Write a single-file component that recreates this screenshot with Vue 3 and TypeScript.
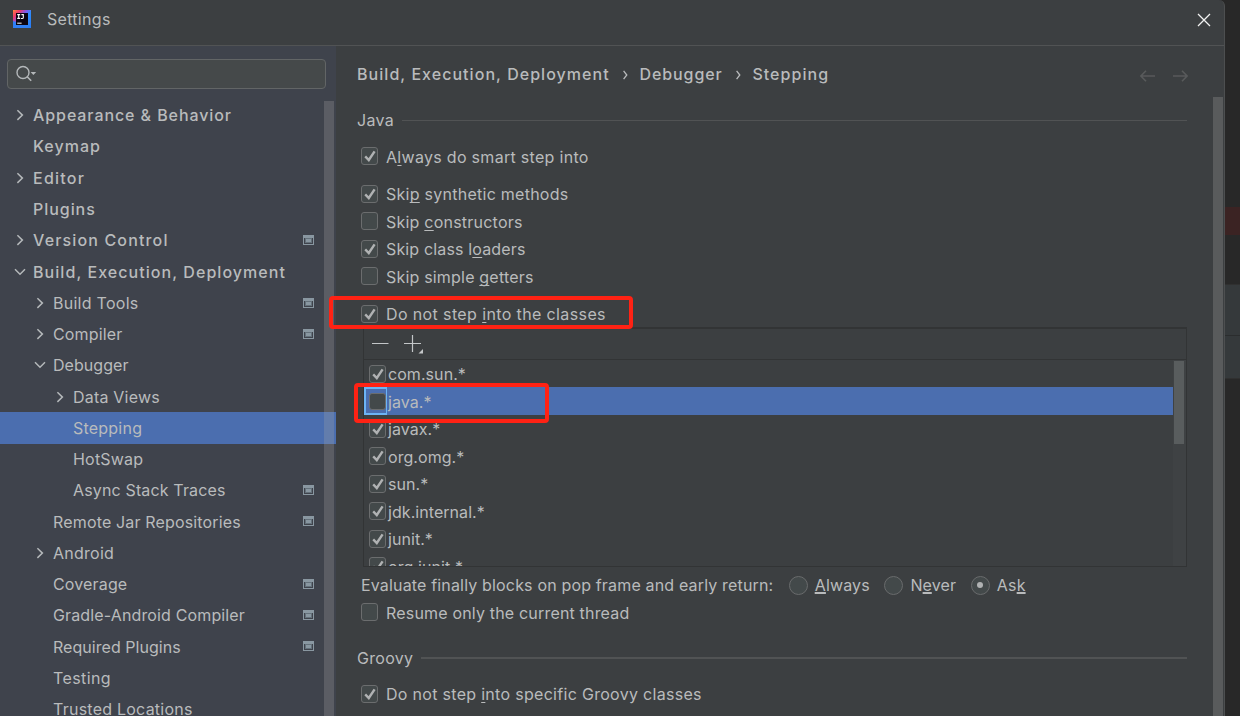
<script setup lang="ts">
interface TreeItem {
  label: string
  level: number
  tracking: number
  arrow?: 'right' | 'down'
  bold?: boolean
  project?: boolean
  selected?: boolean
}
interface Option {
  before: string
  key: string
  after: string
  tracking: number
  checked: boolean
  gap?: boolean
}

const tree: TreeItem[] = [
  { label: 'Appearance & Behavior', level: 0, tracking: 0.92, arrow: 'right', bold: true },
  { label: 'Keymap', level: 0, tracking: 1, bold: true },
  { label: 'Editor', level: 0, tracking: 1.25, arrow: 'right', bold: true },
  { label: 'Plugins', level: 0, tracking: 0.95, bold: true },
  { label: 'Version Control', level: 0, tracking: 1.15, arrow: 'right', bold: true, project: true },
  { label: 'Build, Execution, Deployment', level: 0, tracking: 1.06, arrow: 'down', bold: true },
  { label: 'Build Tools', level: 1, tracking: 0.27, arrow: 'right', project: true },
  { label: 'Compiler', level: 1, tracking: 0.15, arrow: 'right', project: true },
  { label: 'Debugger', level: 1, tracking: 0.05, arrow: 'down' },
  { label: 'Data Views', level: 2, tracking: 0.2, arrow: 'right' },
  { label: 'Stepping', level: 2, tracking: 0.22, selected: true },
  { label: 'HotSwap', level: 2, tracking: 0.2 },
  { label: 'Async Stack Traces', level: 2, tracking: 0.15, project: true },
  { label: 'Remote Jar Repositories', level: 1, tracking: 0.16, project: true },
  { label: 'Android', level: 1, tracking: 0.25, arrow: 'right' },
  { label: 'Coverage', level: 1, tracking: 0.15, project: true },
  { label: 'Gradle-Android Compiler', level: 1, tracking: 0.14, project: true },
  { label: 'Required Plugins', level: 1, tracking: 0.04, project: true },
  { label: 'Testing', level: 1, tracking: 0.4 },
  { label: 'Trusted Locations', level: 1, tracking: 0.24 },
]

const options: Option[] = [
  { before: 'A', key: 'l', after: 'ways do smart step into', tracking: 0.3, checked: true },
  { before: 'Ski', key: 'p', after: ' synthetic methods', tracking: 0.26, checked: true, gap: true },
  { before: 'Skip ', key: 'c', after: 'onstructors', tracking: 0.22, checked: false },
  { before: 'Skip class l', key: 'o', after: 'aders', tracking: 0.15, checked: true },
  { before: 'Skip simple ', key: 'g', after: 'etters', tracking: 0.19, checked: false },
  { before: 'Do not step ', key: 'i', after: 'nto the classes', tracking: 0.38, checked: true, gap: true },
]

const patterns = [
  { name: 'com.sun.*', checked: true },
  { name: 'java.*', checked: false, selected: true },
  { name: 'javax.*', checked: true },
  { name: 'org.omg.*', checked: true },
  { name: 'sun.*', checked: true },
  { name: 'jdk.internal.*', checked: true },
  { name: 'junit.*', checked: true },
  { name: 'org.junit.*', checked: true },
]

const radios = [
  { before: '', key: 'A', after: 'lways', on: false },
  { before: 'N', key: 'e', after: 'ver', on: false },
  { before: 'As', key: 'k', after: '', on: true },
]
</script>

<template>
  <div class="screen">
    <div class="window">
      <header class="titlebar">
        <svg class="logo" width="18" height="18" viewBox="0 0 18 18">
          <defs>
            <linearGradient id="lg" x1="0" y1="0" x2="1" y2="0.9">
              <stop offset="0" stop-color="#ff8a3c" />
              <stop offset="0.22" stop-color="#f0386b" />
              <stop offset="0.45" stop-color="#7b5cf0" />
              <stop offset="0.6" stop-color="#2f8dfc" />
              <stop offset="1" stop-color="#2a7df5" />
            </linearGradient>
          </defs>
          <rect width="18" height="18" fill="url(#lg)" />
          <path d="M0 11L3 12V15H15V18H0Z" fill="#2f80f6" />
          <rect x="3" y="3" width="12" height="12" fill="#0b0512" />
          <path d="M4.2 4.6H7.2M5.7 4.6V8.4M4.2 8.4H7.2M8.4 4.6H10.3V7.4Q10.3 8.5 9.2 8.5H8" fill="none" stroke="#fff" stroke-width="1.1" />
          <path d="M4.2 13.2H8.6" stroke="#ddd" stroke-width="1.2" />
        </svg>
        <span class="title">Settings</span>
        <svg class="close" width="14" height="14" viewBox="0 0 14 14">
          <path d="M1 1L13 13M13 1L1 13" stroke="#f2f2f2" stroke-width="1.3" />
        </svg>
      </header>

      <div class="body">
        <aside class="sidebar">
          <div class="search">
            <svg width="22" height="18" viewBox="0 0 22 18">
              <circle cx="7" cy="7.5" r="6" fill="none" stroke="#b4b8ba" stroke-width="1.4" />
              <path d="M11.2 11.8L15.2 15.8" stroke="#b4b8ba" stroke-width="1.6" />
              <path d="M14.6 7H20.2L17.4 9.9Z" fill="#b4b8ba" />
            </svg>
          </div>
          <ul class="tree">
            <li
              v-for="item in tree"
              :key="item.label"
              :class="['node', 'level-' + item.level, { bold: item.bold, selected: item.selected }]"
            >
              <svg class="arrow" width="14" height="14" viewBox="0 0 14 14">
                <path v-if="item.arrow === 'right'" d="M4.4 2.3L9.4 7.1L4.4 11.9" />
                <path v-else-if="item.arrow === 'down'" d="M2 4.2L7 9.2L12 4.2" />
              </svg>
              <span class="label" :style="{ letterSpacing: item.tracking + 'px' }">{{ item.label }}</span>
              <svg v-if="item.project" class="project" width="11" height="10" viewBox="0 0 11 10">
                <path d="M0 0H11V10H0ZM1 3V9H10V3Z" fill="#8997a1" fill-rule="evenodd" />
                <rect x="2.5" y="3.5" width="6" height="4" fill="#8997a1" stroke="#64717b" />
              </svg>
            </li>
          </ul>
          <div class="side-thumb"></div>
        </aside>

        <main class="content">
          <div class="crumbs">
            <span>Build, Execution, Deployment</span>
            <svg width="5" height="10" viewBox="0 0 5 10"><path d="M0.6 0.8L3.8 5L0.6 9.2" /></svg>
            <span class="parent">Debugger</span>
            <svg width="5" height="10" viewBox="0 0 5 10"><path d="M0.6 0.8L3.8 5L0.6 9.2" /></svg>
            <span>Stepping</span>
            <div class="history">
              <svg width="15" height="12" viewBox="0 0 15 12"><path d="M6 0.7L0.9 6L6 11.3M1 6H15" /></svg>
              <svg width="15" height="12" viewBox="0 0 15 12"><path d="M9 0.7L14.1 6L9 11.3M14 6H0" /></svg>
            </div>
          </div>

          <div class="section"><span>Java</span><hr /></div>

          <div class="options">
            <label v-for="o in options" :key="o.before + o.key" :class="['option', { gap: o.gap }]">
              <span class="box">
                <svg v-if="o.checked" viewBox="0 0 18 18"><path d="M4.2 9.3L7.8 13L13.6 4.3" /></svg>
              </span>
              <span class="text" :style="{ letterSpacing: o.tracking + 'px' }">{{ o.before }}<u>{{ o.key }}</u>{{ o.after }}</span>
            </label>
          </div>

          <div class="panel">
            <div class="toolbar">
              <svg width="60" height="20" viewBox="0 0 60 20">
                <path d="M0 9.5H16.5M32 9.5H49M40.5 1V18" stroke="#c3c6c8" stroke-width="1.2" fill="none" />
                <path d="M51 15V19.5H46.5Z" fill="#c3c6c8" />
              </svg>
            </div>
            <div class="list">
              <div class="rows">
                <div v-for="p in patterns" :key="p.name" :class="['row', { active: p.selected }]">
                  <span class="cell">
                    <span class="box">
                      <svg v-if="p.checked" viewBox="0 0 18 18"><path d="M4.2 9.3L7.8 13L13.6 4.3" /></svg>
                    </span>
                  </span>
                  <span class="name">{{ p.name }}</span>
                </div>
              </div>
              <div class="track"><div class="thumb"></div></div>
            </div>
          </div>

          <div class="evaluate">
            <span class="question">Evaluate finally blocks on pop frame and early return:</span>
            <label v-for="r in radios" :key="r.key" class="choice">
              <span :class="['radio', { on: r.on }]"></span>
              <span class="rtext">{{ r.before }}<u>{{ r.key }}</u>{{ r.after }}</span>
            </label>
          </div>

          <label class="option resume">
            <span class="box"></span>
            <span class="text">Resume only the current thread</span>
          </label>

          <div class="section groovy"><span>Groovy</span><hr /></div>

          <label class="option specific">
            <span class="box">
              <svg viewBox="0 0 18 18"><path d="M4.2 9.3L7.8 13L13.6 4.3" /></svg>
            </span>
            <span class="text">Do not step <u>i</u>nto specific Groovy classes</span>
          </label>
          <div class="main-thumb"></div>
        </main>
      </div>
    </div>

    <div class="editor">
      <div class="breakpoint"></div>
      <div class="pane"></div>
    </div>

    <div class="mark mark-option"></div>
    <div class="mark mark-pattern"></div>
  </div>
</template>

<style>
html,
body {
  background: #282828;
  overflow: hidden;
}
</style>

<style scoped>
* {
  box-sizing: border-box;
}
.screen {
  position: relative;
  display: flex;
  width: 1240px;
  height: 716px;
  overflow: hidden;
  background: #282828;
  color: #b9bbbc;
  font: 400 16px/20px Inter, 'Liberation Sans', sans-serif;
  letter-spacing: 0.3px;
  white-space: nowrap;
}
.window {
  display: flex;
  flex-direction: column;
  width: 1225px;
  height: 716px;
  border-right: 1px solid #4d4f50;
  border-top-right-radius: 6px;
  background: #3c3f41;
  overflow: hidden;
}
.titlebar {
  display: flex;
  align-items: center;
  height: 46px;
  flex: none;
  padding: 0 13px 7px 13px;
  border-bottom: 1px solid #515354;
}
.title {
  margin-left: 16px;
}
.close {
  margin-left: auto;
  margin-top: 2px;
}
.body {
  display: flex;
  height: 670px;
}
.sidebar {
  position: relative;
  width: 336px;
  flex: none;
  padding-top: 13px;
  background: #3f434c;
}
.search {
  display: flex;
  align-items: center;
  width: 319px;
  height: 30px;
  margin-left: 7px;
  padding-left: 8px;
  border: 1px solid #626566;
  border-radius: 4px;
  background: #45494a;
}
.tree {
  list-style: none;
  margin: 10.6px 0 0;
  padding: 0;
}
.node {
  display: flex;
  align-items: center;
  height: 31.28px;
  padding-right: 22px;
}
.level-0 { padding-left: 13px; }
.level-1 { padding-left: 33px; }
.level-2 { padding-left: 53px; }
.node.selected {
  background: #4b6eaf;
}
.arrow {
  flex: none;
  margin-right: 6px;
  fill: none;
  stroke: #b4b8ba;
  stroke-width: 1.5;
}
.bold .label,
.crumbs {
  font-weight: 500;
}
.crumbs {
  letter-spacing: 1.05px;
}
.project {
  margin: 0 0 0.6px auto;
}
.side-thumb {
  position: absolute;
  left: 324px;
  top: 55px;
  bottom: 0;
  width: 10px;
  background: rgba(166, 166, 166, 0.27);
}
.content {
  position: relative;
  width: 888px;
  padding-left: 21px;
}
.crumbs {
  display: flex;
  align-items: center;
  height: 56px;
  padding-right: 36px;
}
.crumbs > svg {
  margin: 2px 11.2px 0 13.6px;
  fill: none;
  stroke: #b9bbbc;
  stroke-width: 1.3;
}
.crumbs .parent {
  letter-spacing: 0.9px;
}
.history {
  display: flex;
  gap: 18px;
  margin: 4px 0 0 auto;
}
.history svg {
  fill: none;
  stroke: #585a5b;
  stroke-width: 1.6;
}
.section {
  display: flex;
  align-items: center;
  gap: 8px;
  height: 36px;
  padding-right: 37px;
}
.section hr {
  flex: 1;
  height: 1px;
  margin: 1px 0 0;
  border: 0;
  background: #515354;
}
.options {
  height: 189px;
  padding-top: 4.4px;
}
.option {
  display: flex;
  align-items: center;
  height: 27.5px;
  padding-left: 4px;
}
.option.gap {
  margin-top: 10px;
}
.box {
  position: relative;
  width: 17px;
  height: 18px;
  flex: none;
  border: 1px solid #6b6d6e;
  border-radius: 3px;
  background: #43494a;
}
.box svg {
  position: absolute;
  left: -1.5px;
  top: -1px;
  width: 18px;
  height: 18px;
  fill: none;
  stroke: #b0b2b3;
  stroke-width: 2.4;
}
.text {
  margin-left: 8px;
  padding-top: 1px;
}
.resume .text {
  letter-spacing: 0.18px;
}
u {
  text-decoration-thickness: 1px;
  text-underline-offset: 2px;
  text-decoration-skip-ink: none;
}
.panel {
  width: 824px;
  height: 240px;
  margin-left: 6px;
  border: 1px solid #323435;
  border-top-width: 2px;
}
.toolbar {
  height: 31px;
  padding: 5px 0 0 8px;
  border-bottom: 1px solid #323435;
}
.list {
  display: flex;
  height: 206px;
  overflow: hidden;
}
.rows {
  flex: 1;
  margin-top: -0.3px;
  letter-spacing: 0.06px;
}
.row {
  display: flex;
  align-items: center;
  height: 27.5px;
}
.row.active {
  background: #4b6eaf;
}
.cell {
  display: flex;
  align-items: center;
  width: 23px;
  height: 100%;
  padding-left: 4px;
  border: 2px solid transparent;
  border-right-width: 1px;
}
.cell .box {
  margin: 1px 0 0 -1px;
}
.active .cell {
  border-color: #6cb4f5;
}
.active .box {
  height: 17px;
}
.name {
  margin-left: 1px;
  padding-top: 1.6px;
}
.track {
  width: 13px;
  padding: 1px 2px 0 1px;
  background: #3f4244;
}
.thumb {
  height: 83px;
  background: #595d5e;
}
.evaluate {
  display: flex;
  align-items: center;
  height: 31.5px;
  padding: 5.5px 0 0 4px;
}
.question {
  margin-right: 15.3px;
  padding-bottom: 1.4px;
  letter-spacing: 0.165px;
}
.choice {
  display: flex;
  align-items: center;
  margin-right: 14.6px;
  letter-spacing: 0.15px;
}
.radio {
  display: flex;
  align-items: center;
  justify-content: center;
  width: 19px;
  height: 19px;
  margin-right: 7px;
  border: 1px solid #696b6c;
  border-radius: 50%;
  background: #43494a;
}
.radio.on::after {
  content: '';
  width: 6px;
  height: 6px;
  border-radius: 50%;
  background: #b0b2b3;
}
.rtext {
  padding-bottom: 1.4px;
}
.choice u {
  text-decoration-thickness: 2px;
  text-underline-offset: 1px;
}
.groovy {
  margin-top: 14.5px;
}
.groovy span {
  padding-bottom: 1.2px;
}
.groovy hr {
  height: 2px;
  margin-top: -1px;
}
.specific {
  margin-top: 4px;
}
.specific .text {
  padding-top: 0;
}
.main-thumb {
  position: absolute;
  left: 877px;
  top: 51px;
  bottom: 0;
  width: 10px;
  background: #595b5c;
}
.editor {
  flex: 1;
  padding-top: 207px;
}
.breakpoint {
  height: 28px;
  background: #3b2323;
}
.pane {
  height: 95px;
  margin-top: 49px;
  border: 1px solid #303030;
  border-width: 1px 0;
  background: linear-gradient(#35393b 50px, #2b2d2e 50px 51px, #35393b 51px);
}
.mark {
  position: absolute;
  border: 4px solid #ff2214;
  border-radius: 4px;
}
.mark-option {
  left: 329px;
  top: 296px;
  width: 304px;
  height: 33px;
}
.mark-pattern {
  left: 354px;
  top: 383px;
  width: 195px;
  height: 40px;
}
</style>
